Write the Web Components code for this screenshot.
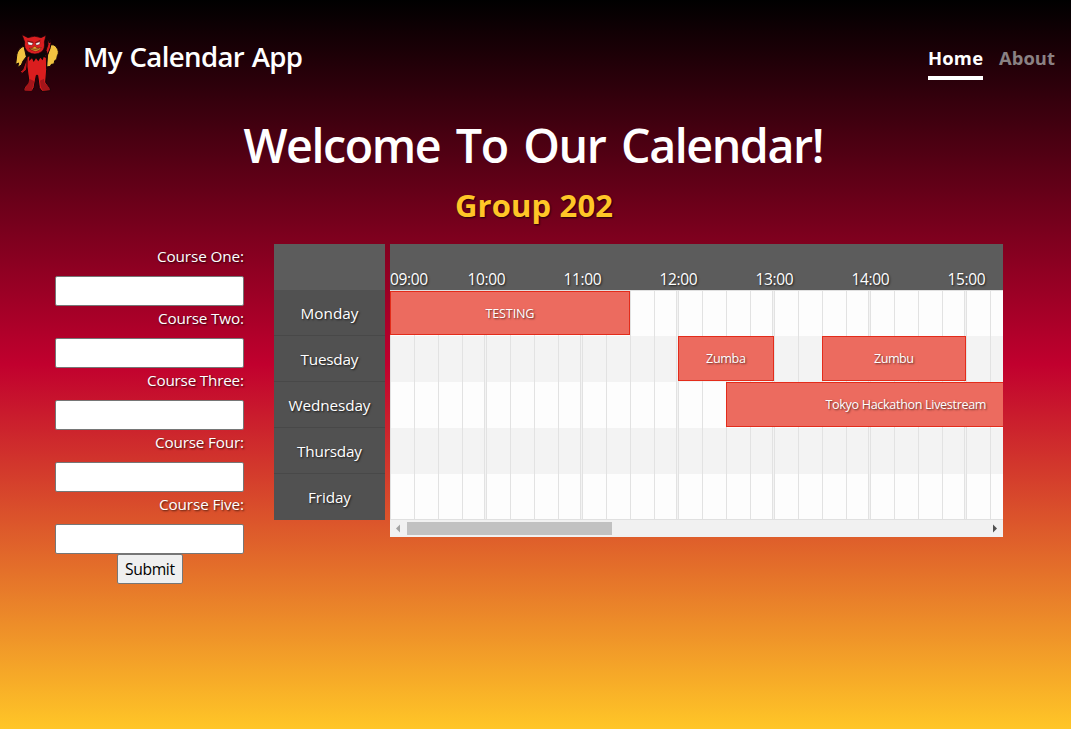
<!DOCTYPE html>
<html lang="en">
<head>
<meta charset="utf-8">
<title>My Calendar App</title>
<style>
html{height:100%}
body{margin:0;height:729px;overflow:hidden;font-family:"Open Sans","Noto Sans",sans-serif;color:#fff;background:linear-gradient(#000 0%,#c1002e 50%,#ffc627 100%)}
</style>
</head>
<body>
<calendar-app></calendar-app>
<script>
const define = (name, html, setup) => {
  const tpl = document.createElement('template');
  tpl.innerHTML = html;
  customElements.define(name, class extends HTMLElement {
    connectedCallback() {
      if (this.shadowRoot) return;
      this.attachShadow({mode: 'open'}).append(tpl.content.cloneNode(true));
      if (setup) setup(this, this.shadowRoot);
    }
  });
};

/* Text tracked so that it fills the width given in its "w" attribute. */
define('fit-text', `<style>:host{display:inline-block;white-space:nowrap;text-align:left}span{display:inline-block}</style><span><slot></slot></span>`,
  (el, root) => {
    const span = root.querySelector('span');
    const w = +el.getAttribute('w');
    const n = el.textContent.length;
    const natural = span.getBoundingClientRect().width;
    el.style.width = w + 'px';
    el.style.letterSpacing = ((w - natural) / (n - 1)) + 'px';
  });

define('sparky-logo', `<style>:host{display:block;width:47px;height:62px}svg{display:block}</style>
<svg width="47" height="62" viewBox="42 36 141 186" stroke="#160407" stroke-width="3" stroke-linejoin="round">
<path d="M72 79C60 82 51 95 50 108l-3 25 9-4-3 13 11-7 5-12 10-13z" fill="#f2c341"/>
<path d="M150 76c7-4 14-1 19 5 7 9 8 20 3 26l-2 11-6 4-2 10-8 1-3 6-11 2 3-39z" fill="#f2c341"/>
<path d="M80 117L68 149l-7 5 5 7 13-11 7-27z" fill="#bd1519"/>
<path d="M138 91l6-18-2-12 3-1 3 9 2-11 3 12-2 13-8 21z" fill="#d51c1d"/>
<path d="M81 104h58l1 45-3 38 12 17 2 8-25 2-8-11-5-37h-4l-7 37-5 9-25-1 2-10 13-14-6-46z" fill="#db1d1e"/>
<path d="M88 176l-3 15-12 15 1 6 21 1 8-29zM120 182l3 20 5 9 21-1-1-7-15-16-1-11z" fill="#a3151a" stroke="none"/>
<path d="M79 95q26 16 55 1l5 18-8-3-3 10-7-8-6 11-7-9-7 11-5-11-9 8 1-14-10 6z" fill="#0d0707" stroke="none"/>
<path d="M66 44l18 9q20-9 39 0l15-7-5 20q3 20-8 29-20 14-40 1-14-10-11-30z" fill="#dc1e20" stroke-width="2"/>
<path d="M83 65l16 4-3 7-11-2zM107 70l13-5-1 8-10 3z" fill="#fff" stroke-width="1"/>
<path d="M87 85l10-1 8-6 5 6 14-1-7 8q-15 7-30-6z" fill="#e5a22d" stroke-width="1"/>
<path d="M82 63l18 4M106 68l15-7M91 86q14 4 27 0" fill="none" stroke="#460b0e" stroke-width="2"/>
</svg>`);

define('nav-link', `<style>:host{display:block;height:36px;font:700 18.4px/28px "Open Sans",sans-serif;color:#8a8183;box-sizing:border-box;border-bottom:4px solid transparent}:host([active]){color:#fff;border-color:#fff}a{display:block}</style><a><slot></slot></a>`);

define('app-header', `<style>
:host{display:flex;height:114px;box-sizing:border-box;padding:32px 16px 0 14px;align-items:flex-start}
.brand{font:600 27.6px/40px "Open Sans",sans-serif;word-spacing:1px;margin:4px 0 0 22px;flex:1}
nav{display:flex;gap:16px;margin-top:12px}
</style>
<sparky-logo></sparky-logo><div class="brand"><fit-text w="220">My Calendar App</fit-text></div>
<nav><nav-link active><fit-text w="55">Home</fit-text></nav-link><nav-link><fit-text w="56">About</fit-text></nav-link></nav>`);

define('page-title', `<style>
:host{display:flex;flex-direction:column;align-items:center;height:130px;box-sizing:border-box;padding-right:3px;text-shadow:1px 1px 2px rgba(0,0,0,.7)}
h1{margin:-1px 0 0;font:600 46.6px/64px "Open Sans",sans-serif;word-spacing:5px;text-shadow:none}
h2{margin:7px 0 0;font:700 31px/42px "Open Sans",sans-serif;color:#ffc627}
</style><h1><fit-text w="581">Welcome To Our Calendar!</fit-text></h1><h2><fit-text w="158">Group 202</fit-text></h2>`);

define('course-field', `<style>
:host{display:block;height:62px;text-align:right;font-size:15.3px;line-height:24px;text-shadow:1px 1px 2px rgba(0,0,0,.7)}
label{display:block;height:32px}
input{display:block;width:189px;height:30px;box-sizing:border-box;border:1px solid #767676;border-radius:2px;background:#fff;margin:0;padding:0}
</style><label><slot></slot></label><input type="text">`);

define('course-form', `<style>
:host{display:flex;flex-direction:column;width:189px}
button{align-self:center;width:66px;height:30px;margin:0 0 0 1px;padding:0;border:1px solid #767676;border-radius:2px;background:#efefef;color:#000;font:15.7px/26px "Open Sans",sans-serif}
</style>
<course-field><fit-text w="87">Course One:</fit-text></course-field>
<course-field><fit-text w="86">Course Two:</fit-text></course-field>
<course-field><fit-text w="97">Course Three:</fit-text></course-field>
<course-field><fit-text w="89">Course Four:</fit-text></course-field>
<course-field><fit-text w="85">Course Five:</fit-text></course-field>
<button type="button"><fit-text w="50">Submit</fit-text></button>`);

define('day-list', `<style>
:host{display:block;width:111px;background:#515151;text-align:center;font-size:15.3px;text-shadow:1px 1px 2px rgba(0,0,0,.7)}
.head{height:46px;background:#5c5c5c}
.day{height:46px;box-sizing:border-box;line-height:46px;border-bottom:1px solid #484848}
.day:last-child{border:0}
</style><div class="head"></div>
<div class="day"><fit-text w="58">Monday</fit-text></div><div class="day"><fit-text w="58">Tuesday</fit-text></div><div class="day"><fit-text w="82">Wednesday</fit-text></div><div class="day"><fit-text w="65">Thursday</fit-text></div><div class="day"><fit-text w="43">Friday</fit-text></div>`);

/* An event bar; "gap" and "span" are in pixels, at 96px an hour. */
define('calendar-event', `<style>
:host{display:block;box-sizing:border-box;flex:none;border:1px solid #e32c1b;background:#ec6b5f;text-align:center;font-size:12.6px;line-height:43px;height:45px;text-shadow:1px 1px 2px rgba(0,0,0,.6)}
</style><slot></slot>`, el => {
  el.style.marginLeft = el.getAttribute('gap') + 'px';
  el.style.width = el.getAttribute('span') + 'px';
});

define('time-grid', `<style>
:host{display:block;width:613px;overflow:hidden}
.hours{display:flex;height:46px;background:#5c5c5c;font-size:15.5px;text-shadow:1px 1px 2px rgba(0,0,0,.7)}
.hours span{flex:none;width:97px;margin-right:-1px;text-align:center;padding-top:23px;line-height:24px}
.hours span:first-child{width:48px;margin-right:0;text-align:left}
.rows{height:230px;background:
 linear-gradient(#e0e0e0,#e0e0e0) 0 0/100% 1px no-repeat,
 linear-gradient(#e0e0e0,#e0e0e0) 0 100%/100% 1px no-repeat,
 repeating-linear-gradient(90deg,#e2e2e2 0 1px,transparent 1px 24px),
 repeating-linear-gradient(90deg,transparent 0 94px,#e2e2e2 94px 95px,#f3f3f3 95px 96px),
 repeating-linear-gradient(#fdfdfd 0 46px,#f3f3f3 46px 92px)}
.row{height:46px;display:flex;overflow:hidden}
.first{box-sizing:border-box;padding-top:1px}
.first calendar-event{height:44px;line-height:43px}
.bar{height:17px;background:#f1f1f1;display:flex;align-items:center;box-sizing:border-box}
.thumb{width:205px;height:13px;background:#c1c1c1;margin-right:auto}
svg{display:block;width:17px;height:17px}
</style>
<div class="hours"><span><fit-text w="38">09:00</fit-text></span><span><fit-text w="38">10:00</fit-text></span><span><fit-text w="38">11:00</fit-text></span><span><fit-text w="38">12:00</fit-text></span><span><fit-text w="38">13:00</fit-text></span><span><fit-text w="38">14:00</fit-text></span><span><fit-text w="38">15:00</fit-text></span></div>
<div class="rows">
<div class="row first"><calendar-event gap="0" span="240"><fit-text w="49">TESTING</fit-text></calendar-event></div>
<div class="row"><calendar-event gap="288" span="96"><fit-text w="40">Zumba</fit-text></calendar-event><calendar-event gap="48" span="144"><fit-text w="40">Zumbu</fit-text></calendar-event></div>
<div class="row"><calendar-event gap="336" span="360"><fit-text w="161">Tokyo Hackathon Livestream</fit-text></calendar-event></div>
<div class="row"></div><div class="row"></div>
</div>
<div class="bar"><svg viewBox="0 0 17 17"><path d="M10 4.500v8L6 8.500z" fill="#a3a3a3"/></svg><div class="thumb"></div><svg viewBox="0 0 17 17"><path d="M7 4.500v8l4-4z" fill="#505050"/></svg></div>`);

define('calendar-app', `<style>
:host{display:block;width:1071px;height:729px}
main{display:flex;align-items:flex-start;padding-left:55px}
day-list{margin:0 5px 0 30px}
</style><app-header></app-header><page-title></page-title>
<main><course-form></course-form><day-list></day-list><time-grid></time-grid></main>`);
</script>
</body>
</html>
